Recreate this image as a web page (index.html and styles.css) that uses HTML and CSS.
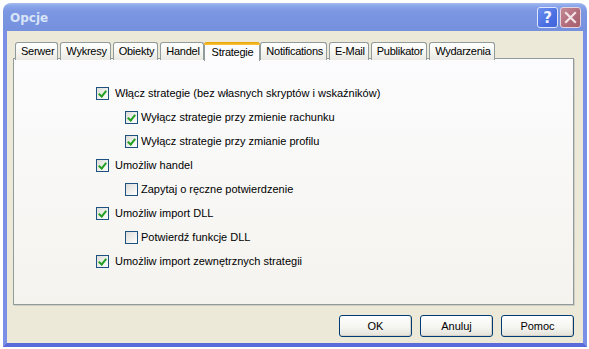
FILE: index.html
```html
<!DOCTYPE html>
<html>
<head>
<meta charset="utf-8">
<link rel="stylesheet" href="styles.css">
</head>
<body>
<div class="window">
  <div class="titlebar">
    <span class="title">Opcje</span>
    <div class="tbtns">
      <div class="tb help">?</div>
      <div class="tb close">
        <svg width="13" height="13" viewBox="0 0 13 13"><path d="M2 2 L11 11 M11 2 L2 11" stroke="#f2e4e8" stroke-width="2.2" stroke-linecap="square"/></svg>
      </div>
    </div>
  </div>
  <div class="client">
    <div class="tabs">
      <div class="tab">Serwer</div>
      <div class="tab">Wykresy</div>
      <div class="tab">Obiekty</div>
      <div class="tab">Handel</div>
      <div class="tab active">Strategie</div>
      <div class="tab">Notifications</div>
      <div class="tab">E-Mail</div>
      <div class="tab">Publikator</div>
      <div class="tab">Wydarzenia</div>
    </div>
    <div class="panel">
      <div class="opt"><span class="cb on"></span><span>Włącz strategie (bez własnych skryptów i wskaźników)</span></div>
      <div class="opt sub"><span class="cb on"></span><span>Wyłącz strategie przy zmienie rachunku</span></div>
      <div class="opt sub"><span class="cb on"></span><span>Wyłącz strategie przy zmianie profilu</span></div>
      <div class="opt"><span class="cb on"></span><span>Umożliw handel</span></div>
      <div class="opt sub"><span class="cb"></span><span>Zapytaj o ręczne potwierdzenie</span></div>
      <div class="opt"><span class="cb on"></span><span>Umożliw import DLL</span></div>
      <div class="opt sub"><span class="cb"></span><span>Potwierdź funkcje DLL</span></div>
      <div class="opt"><span class="cb on"></span><span>Umożliw import zewnętrznych strategii</span></div>
    </div>
    <div class="buttons">
      <div class="btn">OK</div>
      <div class="btn">Anuluj</div>
      <div class="btn">Pomoc</div>
    </div>
  </div>
</div>
</body>
</html>
```
FILE: styles.css
```css
html, body {
  margin: 0;
  padding: 0;
  background: #ffffff;
}
body {
  font-family: "Liberation Sans", Arial, sans-serif;
  font-size: 11px;
  color: #000;
}
.window {
  margin: 3px 0 0 3px;
  width: 584px;
  height: 344px;
  display: flex;
  flex-direction: column;
}
.titlebar {
  height: 28px;
  flex: none;
  border-radius: 8px 8px 0 0;
  background: linear-gradient(#a6bdf0 0, #8aa5ea 3px, #7d98e2 8px, #7893df 20px, #7590dc 28px);
  display: flex;
  align-items: center;
  padding: 0 6px 0 7px;
  box-sizing: border-box;
}
.title {
  font-family: "DejaVu Sans", Verdana, sans-serif;
  font-weight: bold;
  font-size: 12px;
  color: #d8e4f8;
  flex: 1;
  padding-top: 1px;
}
.tbtns {
  display: flex;
  gap: 2px;
  margin-top: 1px;
}
.tb {
  width: 19px;
  height: 19px;
  border: 1px solid #dde6fa;
  border-radius: 3px;
  display: flex;
  align-items: center;
  justify-content: center;
}
.help {
  background: linear-gradient(135deg, #6d8ff0, #4a6fe2 60%, #4166dc);
  color: #eef2fd;
  font-family: "DejaVu Sans", sans-serif;
  font-weight: bold;
  font-size: 15px;
}
.close {
  background: linear-gradient(135deg, #c48a96, #b06a78 60%, #a85e6e);
  border-color: #e6d4de;
}
.client {
  flex: 1;
  background: #ece9d8;
  border: 4px solid #7b8fe6;
  border-top: none;
  border-bottom-color: #5a6ad8;
  display: flex;
  flex-direction: column;
}
.tabs {
  display: flex;
  align-items: flex-end;
  gap: 2px;
  margin: 9px 0 0 8px;
  height: 20px;
  position: relative;
  z-index: 1;
}
.tab {
  height: 17px;
  line-height: 17px;
  padding: 0 3px 0 5px;
  letter-spacing: -0.25px;
  border: 1px solid #919b9c;
  border-bottom: none;
  border-radius: 3px 3px 0 0;
  background: linear-gradient(#ffffff, #f6f6f3 50%, #eae9e2);
  white-space: nowrap;
}
.tab.active {
  height: 19px;
  line-height: 20px;
  margin: 0 -2px -1px -2px;
  padding: 0 6px 0 7px;
  background: #fcfcfe;
  border-top: none;
  position: relative;
}
.tab.active::before {
  content: "";
  position: absolute;
  left: -1px;
  right: -1px;
  top: 0;
  height: 3px;
  background: linear-gradient(#e6a000, #ffc83c);
  border-radius: 3px 3px 0 0;
}
.panel {
  margin: -2px 0 0 6px;
  width: 561px;
  height: 247px;
  box-sizing: border-box;
  border: 1px solid #919b9c;
  box-shadow: 1px 1px 0 #d0cec3;
  background: linear-gradient(#fcfcfe, #f4f3ee);
  padding: 22px 0 0 82px;
  display: flex;
  flex-direction: column;
}
.opt {
  height: 24px;
  display: flex;
  align-items: center;
  gap: 6px;
}
.opt.sub {
  padding-left: 29px;
  gap: 3px;
}
.cb {
  width: 11px;
  height: 11px;
  flex: none;
  border: 1px solid #1c5180;
  background: linear-gradient(135deg, #dcdcd7, #ffffff);
  position: relative;
}
.cb.on::after {
  content: "";
  position: absolute;
  left: 3px;
  top: 1px;
  width: 3px;
  height: 6px;
  border: solid #21a121;
  border-width: 0 2.5px 2.5px 0;
  transform: rotate(40deg);
}
.buttons {
  display: flex;
  justify-content: flex-end;
  gap: 8px;
  margin: 10px 9px 0 0;
}
.btn {
  width: 71px;
  height: 20px;
  border: 1px solid #003c74;
  border-radius: 3px;
  background: linear-gradient(#ffffff, #f4f4f0 60%, #e3e2da);
  box-shadow: inset -1px -1px 0 #d6d0c5;
  display: flex;
  align-items: center;
  justify-content: center;
}
```
